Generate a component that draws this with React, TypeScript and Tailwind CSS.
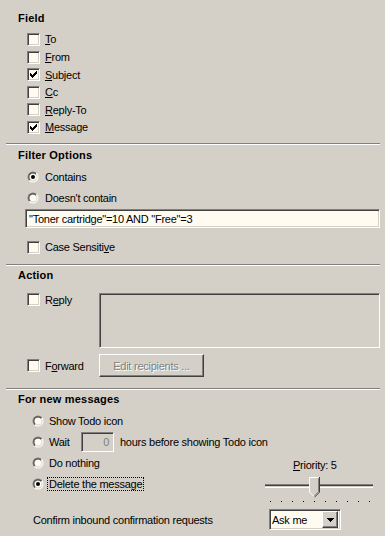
import React from "react";

const sunken =
  "border border-t-[#808080] border-l-[#808080] border-r-white border-b-white shadow-[inset_1px_1px_0_#404040,inset_-1px_-1px_0_#d4d0c8]";
const raised =
  "border border-t-white border-l-white border-r-[#404040] border-b-[#404040] shadow-[inset_-1px_-1px_0_#808080]";

// 7x7 pixel check mark, one column at a time
const checkCols = [2, 3, 4, 3, 2, 1, 0];

const Check = ({ checked }: { checked?: boolean }) => (
  <span className={`w-[13px] h-[13px] shrink-0 flex items-center justify-center bg-[#fffbf0] ${sunken}`}>
    {checked && (
      <svg width="7" height="7" viewBox="0 0 7 7" shapeRendering="crispEdges">
        {checkCols.map((y, x) => (
          <rect key={x} x={x} y={y} width="1" height="3" fill="#000" />
        ))}
      </svg>
    )}
  </span>
);

const Radio = ({ checked }: { checked?: boolean }) => (
  <svg width="12" height="12" viewBox="0 0 12 12" className="shrink-0">
    <defs>
      <linearGradient id="rOuter" x1="0" y1="0" x2="1" y2="1">
        <stop offset="0.5" stopColor="#808080" />
        <stop offset="0.5" stopColor="#ffffff" />
      </linearGradient>
      <linearGradient id="rInner" x1="0" y1="0" x2="1" y2="1">
        <stop offset="0.5" stopColor="#404040" />
        <stop offset="0.5" stopColor="#d4d0c8" />
      </linearGradient>
    </defs>
    <circle cx="6" cy="6" r="5.5" fill="url(#rOuter)" />
    <circle cx="6" cy="6" r="4.5" fill="url(#rInner)" />
    <circle cx="6" cy="6" r="3.6" fill="#fffbf0" />
    {checked && <circle cx="6" cy="6" r="2" fill="#000" />}
  </svg>
);

const Sep = () => (
  <div className="ml-[6px] mr-[5px] h-[2px] border-t border-t-[#808080] border-b border-b-white" />
);

const Heading = ({ children }: { children: React.ReactNode }) => (
  <div className="pl-[18px] h-[14px] font-bold tracking-[0.2px]">{children}</div>
);

const fieldRows: { label: React.ReactNode; checked?: boolean; h: string }[] = [
  { label: <><u>T</u>o</>, h: "h-[18px]" },
  { label: <><u>F</u>rom</>, h: "h-[18px]" },
  { label: <><u>S</u>ubject</>, checked: true, h: "h-[17px]" },
  { label: <><u>C</u>c</>, h: "h-[18px]" },
  { label: <><u>R</u>eply-To</>, h: "h-[17px]" },
  { label: <><u>M</u>essage</>, checked: true, h: "h-[18px]" },
];

const disabledText = "text-[#808080] [text-shadow:1px_1px_0_#fff]";

export default function App() {
  return (
    <div className="w-[385px] h-[536px] overflow-hidden bg-[#d4d0c8] text-black text-[11px] leading-[14px] tracking-[-0.25px] font-['Liberation_Sans',Arial,sans-serif]">
      {/* Field */}
      <div className="pt-[11px]">
        <Heading>Field</Heading>
        <div className="mt-[5px]">
          {fieldRows.map((r, i) => (
            <div key={i} className={`flex items-center pl-[27px] ${r.h}`}>
              <Check checked={r.checked} />
              <span className="ml-[5px]">{r.label}</span>
            </div>
          ))}
        </div>
      </div>
      <div className="mt-[7px]">
        <Sep />
      </div>

      {/* Filter Options */}
      <div className="mt-[3px]">
        <Heading>Filter Options</Heading>
        <div className="mt-[4px]">
          <div className="flex items-center h-[21px] pl-[27px]">
            <Radio checked />
            <span className="ml-[6px]">Contains</span>
          </div>
          <div className="flex items-center h-[21px] pl-[27px]">
            <Radio />
            <span className="ml-[6px]">Doesn't contain</span>
          </div>
        </div>
        <div className={`mt-[1px] ml-[25px] mr-[5px] h-[19px] bg-[#fffbf0] flex items-center pl-[3px] ${sunken}`}>
          "Toner cartridge"=10 AND "Free"=3
        </div>
        <div className="mt-[10px] flex items-center h-[18px] pl-[27px]">
          <Check />
          <span className="ml-[5px]">
            Case Sensiti<u>v</u>e
          </span>
        </div>
      </div>
      <div className="mt-[8px]">
        <Sep />
      </div>

      {/* Action */}
      <div className="mt-[2px]">
        <Heading>Action</Heading>
        <div className="mt-[11px] flex">
          <div className="w-[99px] pl-[27px] flex items-center h-[13px]">
            <Check />
            <span className="ml-[5px]">
              R<u>e</u>ply
            </span>
          </div>
          <div className={`w-[281px] h-[55px] bg-[#d4d0c8] ${sunken}`} />
        </div>
        <div className="mt-[6px] flex items-center">
          <div className="w-[99px] pl-[27px] flex items-center">
            <Check />
            <span className="ml-[5px]">
              F<u>o</u>rward
            </span>
          </div>
          <div className={`w-[105px] h-[23px] flex items-center justify-center ${raised} ${disabledText}`}>
            Edit recipients ...
          </div>
        </div>
      </div>
      <div className="mt-[11px]">
        <Sep />
      </div>

      {/* For new messages */}
      <div className="mt-[2px]">
        <Heading>For new messages</Heading>
        <div className="mt-[4px]">
          <div className="flex items-center h-[21px] pl-[32px]">
            <Radio />
            <span className="ml-[5px]">Show Todo icon</span>
          </div>
          <div className="flex items-center h-[21px] pl-[32px]">
            <Radio />
            <span className="ml-[5px] w-[32px]">Wait</span>
            <div className={`w-[33px] h-[20px] flex items-center justify-end pr-[4px] ${sunken} ${disabledText} [text-shadow:none]`}>
              0
            </div>
            <span className="ml-[6px]">hours before showing Todo icon</span>
          </div>
          <div className="flex">
            <div className="flex-1">
              <div className="flex items-center h-[21px] pl-[32px]">
                <Radio />
                <span className="ml-[5px]">Do nothing</span>
              </div>
              <div className="flex items-center h-[21px] pl-[32px]">
                <Radio checked />
                <span className="ml-[3px] px-[1px] h-[14px] leading-[12px] border border-dotted border-black">
                  Delete the message
                </span>
              </div>
              <div className="mt-[19px] pl-[33px]">Confirm inbound confirmation requests</div>
            </div>
            <div className="w-[110px] mr-[10px] pt-[6px]">
              <div className="pl-[28px] h-[14px]">
                <u>P</u>riority: 5
              </div>
              <div className="relative mt-[5px] h-[20px] w-[108px]">
                <div className="absolute left-0 right-0 top-[7px] h-[4px] border-t border-t-[#808080] border-b border-b-white bg-[#404040] shadow-[inset_0_-1px_0_#d4d0c8]" />
                <svg className="absolute left-[44px] top-0" width="11" height="21" viewBox="0 0 11 21">
                  <polygon points="0,0 11,0 11,15 5.5,20.5 0,15" fill="#d4d0c8" />
                  <polyline points="0.5,15 0.5,0.5 10,0.5" fill="none" stroke="#fff" />
                  <line x1="0.5" y1="15" x2="5" y2="19.5" stroke="#fff" />
                  <polyline points="10.5,0 10.5,15.2 5.5,20.2" fill="none" stroke="#404040" />
                  <polyline points="9.5,1 9.5,14.8 5.5,18.8" fill="none" stroke="#808080" />
                </svg>
              </div>
              <div className="mt-[4px] h-[1px] flex gap-[10px] pl-[5px]">
                {Array.from({ length: 10 }).map((_, i) => (
                  <span key={i} className="w-[1px] h-[1px] bg-black" />
                ))}
              </div>
              <div className={`mt-[7px] ml-[4px] w-[72px] h-[21px] bg-[#fffbf0] flex items-center ${sunken}`}>
                <span className="flex-1 pl-[2px]">Ask me</span>
                <div className={`w-[16px] h-[17px] mr-[2px] bg-[#d4d0c8] flex items-center justify-center ${raised}`}>
                  <svg width="7" height="4" viewBox="0 0 7 4" shapeRendering="crispEdges">
                    <polygon points="0,0 7,0 3.5,4" fill="#000" />
                  </svg>
                </div>
              </div>
            </div>
          </div>
        </div>
      </div>
    </div>
  );
}
